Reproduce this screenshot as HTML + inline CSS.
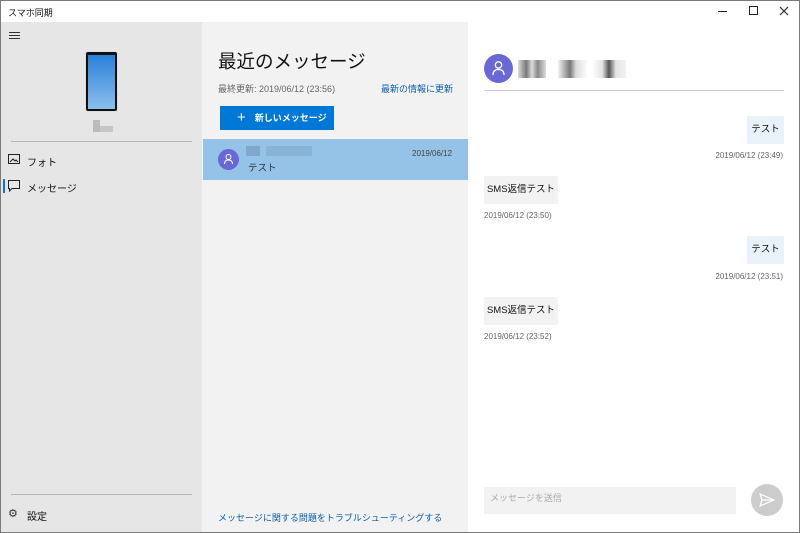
<!DOCTYPE html>
<html><head><meta charset="utf-8"><style>
*{margin:0;padding:0;box-sizing:border-box}
body{width:800px;height:533px;overflow:hidden;font-family:"Liberation Sans","Noto Sans CJK JP",sans-serif;background:#fff;position:relative;color:#111}
.abs{position:absolute}
.frame{position:absolute;left:0;top:0;width:800px;height:533px;border:1px solid #7a7a7a;pointer-events:none}
</style></head><body>
<div class="abs" style="left:8px;top:6px;font-size:9px;color:#111">スマホ同期</div>
<div class="abs" style="left:718px;top:11px;width:9px;height:1px;background:#222"></div>
<div class="abs" style="left:749px;top:6px;width:9px;height:9px;border:1px solid #222"></div>
<svg class="abs" style="left:779px;top:6px" width="10" height="10"><path d="M1 1L9 9M9 1L1 9" stroke="#222" stroke-width="1.1"/></svg>

<div class="abs" style="left:1px;top:22px;width:201px;height:510px;background:#e6e6e6"></div>
<div class="abs" style="left:9px;top:32px;width:11px;height:1px;background:#333;box-shadow:0 3px 0 #333,0 6px 0 #333"></div>
<div class="abs" style="left:85px;top:51px;width:33px;height:61px;background:#111;border-radius:3px;border:1px solid #ddd"></div>
<div class="abs" style="left:88px;top:55px;width:27px;height:54px;background:linear-gradient(#2a7fd9,#8cc0ec)"></div>
<div class="abs" style="left:93px;top:120px;width:7px;height:12px;background:#bbb"></div>
<div class="abs" style="left:100px;top:126px;width:13px;height:6px;background:#c6c6c6"></div>
<div class="abs" style="left:11px;top:141px;width:181px;height:1px;background:#b8b8b8"></div>
<svg class="abs" style="left:8px;top:154px" width="12" height="11"><rect x="0.5" y="0.5" width="11" height="9" fill="none" stroke="#222"/><path d="M2 8L5 5L7 7L8 6L10 8" stroke="#222" fill="none"/></svg>
<div class="abs" style="left:27px;top:154px;font-size:10px">フォト</div>
<div class="abs" style="left:3px;top:179px;width:2px;height:14px;background:#0078d7"></div>
<svg class="abs" style="left:8px;top:180px" width="12" height="12"><path d="M0.5 0.5H11.5V8.5H4L1.5 11V8.5H0.5Z" fill="none" stroke="#222"/></svg>
<div class="abs" style="left:27px;top:180px;font-size:10px">メッセージ</div>
<div class="abs" style="left:11px;top:494px;width:181px;height:1px;background:#b8b8b8"></div>
<div class="abs" style="left:8px;top:507px;font-size:11px;color:#333">⚙</div>
<div class="abs" style="left:27px;top:508px;font-size:10px">設定</div>

<div class="abs" style="left:202px;top:22px;width:266px;height:510px;background:#f2f2f2"></div>
<div class="abs" style="left:218px;top:48px;font-size:18.5px;color:#111">最近のメッセージ</div>
<div class="abs" style="left:218px;top:82px;font-size:9px;color:#666">最終更新: 2019/06/12 (23:56)</div>
<div class="abs" style="left:381px;top:82px;font-size:9px;color:#0a5fa8">最新の情報に更新</div>
<div class="abs" style="left:220px;top:106px;width:114px;height:24px;background:#0078d7;color:#fff;font-size:9px;font-weight:bold;line-height:24px;padding-left:17px"><span style="font-size:15px;font-weight:normal;vertical-align:-1px;margin-right:9px">+</span>新しいメッセージ</div>
<div class="abs" style="left:203px;top:139px;width:265px;height:41px;background:#95c3e8"></div>
<div class="abs" style="left:218px;top:149px;width:21px;height:21px;border-radius:50%;background:#6a67d6"></div>
<svg class="abs" style="left:223px;top:153px" width="11" height="12"><circle cx="5.5" cy="4" r="2.5" fill="none" stroke="#fff"/><path d="M1.5 11Q1.5 7 5.5 7Q9.5 7 9.5 11" fill="none" stroke="#fff"/></svg>
<div class="abs" style="left:246px;top:146px;width:14px;height:10px;background:#80a8cb"></div>
<div class="abs" style="left:266px;top:146px;width:46px;height:10px;background:#88b2d6"></div>
<div class="abs" style="left:248px;top:160px;font-size:9.5px;color:#333">テスト</div>
<div class="abs" style="left:412px;top:149px;font-size:8px;color:#444">2019/06/12</div>
<div class="abs" style="left:218px;top:511px;font-size:9px;color:#0a5fa8">メッセージに関する問題をトラブルシューティングする</div>

<div class="abs" style="left:484px;top:54px;width:29px;height:29px;border-radius:50%;background:#6a67d6"></div>
<svg class="abs" style="left:491px;top:60px" width="15" height="16"><circle cx="7.5" cy="5" r="3.2" fill="none" stroke="#fff" stroke-width="1.3"/><path d="M2 15Q2 9.5 7.5 9.5Q13 9.5 13 15" fill="none" stroke="#fff" stroke-width="1.3"/></svg>
<div class="abs" style="left:518px;top:60px;width:28px;height:18px;background:linear-gradient(90deg,#ddd,#777 30%,#ddd 50%,#888 70%,#ddd)"></div>
<div class="abs" style="left:558px;top:60px;width:30px;height:18px;background:linear-gradient(90deg,#f4f4f4,#777 40%,#ddd 60%,#fff)"></div>
<div class="abs" style="left:592px;top:60px;width:34px;height:18px;background:linear-gradient(90deg,#fff,#e4e4e4 30%,#555 50%,#e4e4e4 70%,#f2f2f2)"></div>
<div class="abs" style="left:484px;top:90px;width:300px;height:1px;background:#ccc"></div>

<div class="abs" style="left:747px;top:116px;width:37px;height:28px;background:#e9f2fb;border-radius:2px;font-size:9.5px;line-height:28px;text-align:center">テスト</div>
<div class="abs" style="left:600px;top:151px;width:183px;text-align:right;font-size:8px;color:#666">2019/06/12 (23:49)</div>
<div class="abs" style="left:484px;top:176px;width:74px;height:28px;background:#f2f2f2;border-radius:2px;font-size:9.5px;line-height:28px;text-align:center">SMS返信テスト</div>
<div class="abs" style="left:484px;top:211px;font-size:8px;color:#666">2019/06/12 (23:50)</div>
<div class="abs" style="left:747px;top:236px;width:37px;height:28px;background:#e9f2fb;border-radius:2px;font-size:9.5px;line-height:28px;text-align:center">テスト</div>
<div class="abs" style="left:600px;top:272px;width:183px;text-align:right;font-size:8px;color:#666">2019/06/12 (23:51)</div>
<div class="abs" style="left:484px;top:297px;width:74px;height:28px;background:#f2f2f2;border-radius:2px;font-size:9.5px;line-height:28px;text-align:center">SMS返信テスト</div>
<div class="abs" style="left:484px;top:332px;font-size:8px;color:#666">2019/06/12 (23:52)</div>

<div class="abs" style="left:484px;top:487px;width:252px;height:27px;background:#f2f2f2;font-size:9px;color:#aaa;line-height:22px;padding-left:6px">メッセージを送信</div>
<div class="abs" style="left:751px;top:484px;width:32px;height:32px;border-radius:50%;background:#ccc"></div>
<svg class="abs" style="left:759px;top:493px" width="16" height="14"><path d="M1 1L15 7L1 13L3 7Z M3 7H15" fill="none" stroke="#fff" stroke-width="1.2"/></svg>
<div class="frame"></div>
</body></html>
